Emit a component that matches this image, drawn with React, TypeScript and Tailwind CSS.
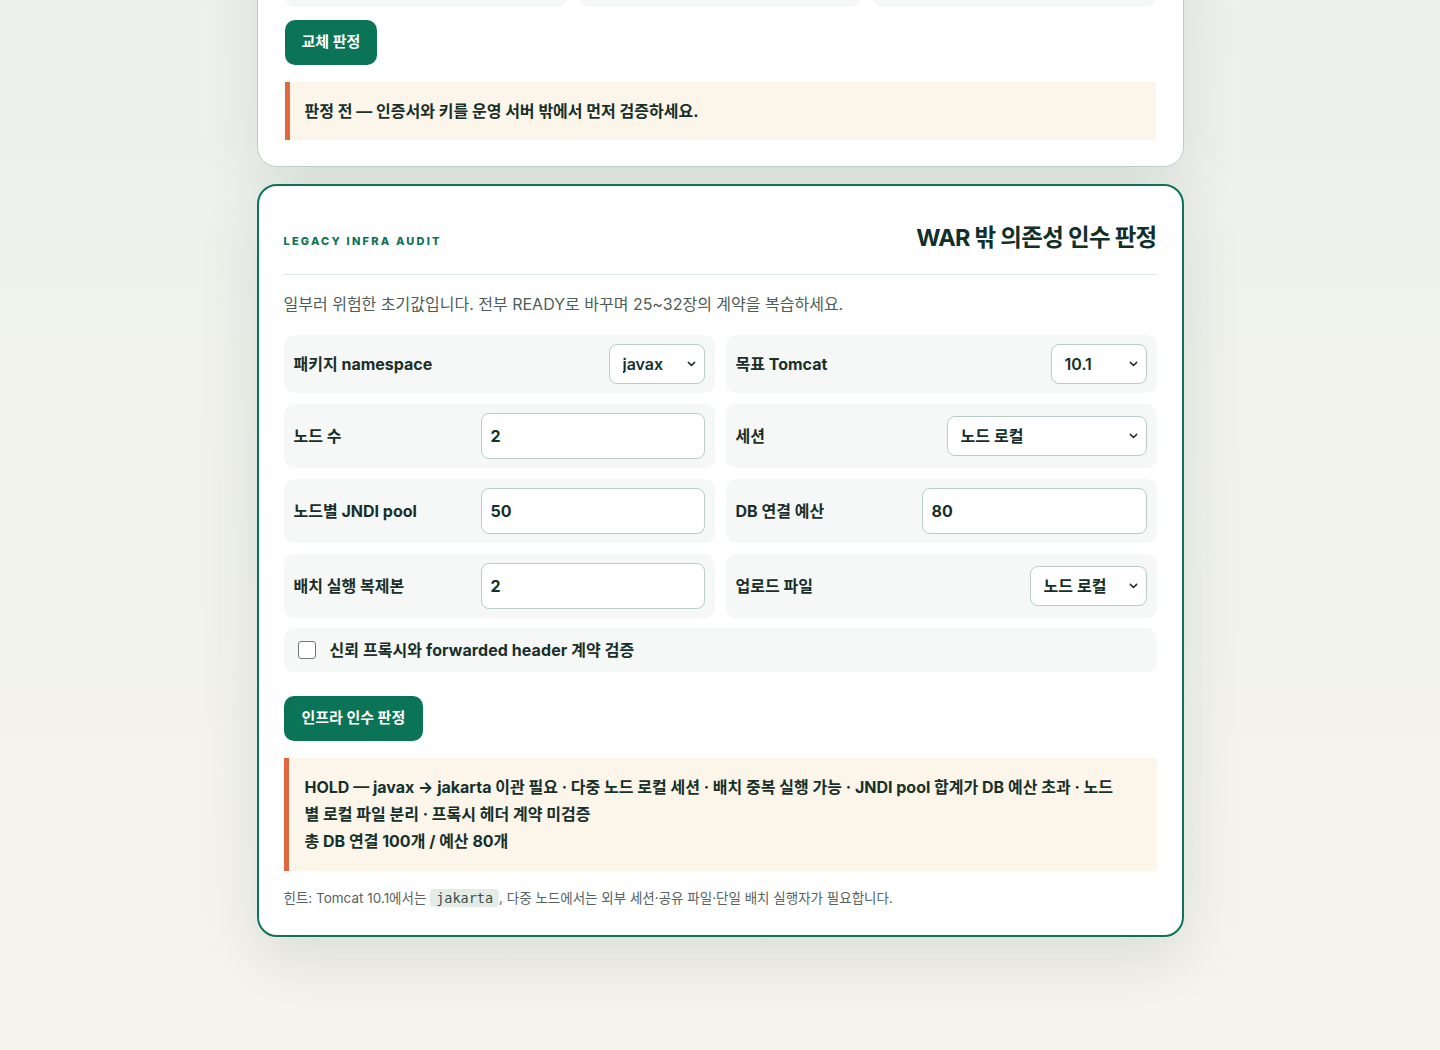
import { useState } from "react";

const font = { fontFamily: '"Inter", "Noto Sans CJK KR", sans-serif' };

function Chevron() {
  return (
    <svg
      viewBox="0 0 10 6"
      className="pointer-events-none absolute right-[9px] top-1/2 h-[6px] w-[9px] -translate-y-1/2"
      fill="none"
      stroke="#1d2b27"
      strokeWidth="1.6"
      strokeLinecap="round"
      strokeLinejoin="round"
    >
      <path d="M1.5 1.2 5 4.7 8.5 1.2" />
    </svg>
  );
}

function Select({ value, options, width }: { value: string; options: string[]; width: string }) {
  const [v, setV] = useState(value);
  return (
    <div className={`relative ${width}`}>
      <select
        value={v}
        onChange={(e) => setV(e.target.value)}
        className="h-[40px] w-full appearance-none rounded-[8px] border border-[#b9cec6] bg-white pl-[13px] pr-[28px] text-[16px] font-semibold text-[#15302a] outline-none"
        style={font}
      >
        {options.map((o) => (
          <option key={o}>{o}</option>
        ))}
      </select>
      <Chevron />
    </div>
  );
}

function NumInput({ value, width }: { value: string; width: string }) {
  const [v, setV] = useState(value);
  return (
    <input
      value={v}
      onChange={(e) => setV(e.target.value)}
      className={`h-[46px] ${width} rounded-[8px] border border-[#b9cec6] bg-white px-[9px] text-[16px] font-bold text-[#15302a] outline-none`}
      style={font}
    />
  );
}

function Row({ label, children }: { label: string; children: React.ReactNode }) {
  return (
    <div className="flex items-center justify-between rounded-[10px] bg-[#f5f8f6] px-[10px] py-[9px]">
      <span className="text-[16px] font-bold text-[#1a2f29]">{label}</span>
      {children}
    </div>
  );
}

export default function App() {
  const [proxy, setProxy] = useState(false);

  return (
    <div
      className="min-h-[1050px] overflow-hidden bg-gradient-to-b from-[#edf0eb] to-[#f6f4ed] pb-[113px]"
      style={font}
    >
      <div className="mx-auto flex w-[927px] flex-col gap-[17px]">
        {/* previous card, scrolled mostly out of view */}
        <div className="mt-[-71px] rounded-[20px] border border-[#bcd0c8] bg-white px-[27px] pt-[27px] pb-[26px] shadow-[0_24px_60px_rgba(30,70,55,0.10)]">
          <div className="grid grid-cols-3 gap-[12px]">
            <div className="h-[50px] rounded-[10px] bg-[#f5f8f6]" />
            <div className="h-[50px] rounded-[10px] bg-[#f5f8f6]" />
            <div className="h-[50px] rounded-[10px] bg-[#f5f8f6]" />
          </div>
          <button className="mt-[13px] h-[45px] rounded-[10px] bg-[#0b7457] px-[17px] text-[15px] font-bold text-white">
            교체 판정
          </button>
          <div className="mt-[17px] border-l-[5px] border-[#e0673f] bg-[#fcf5ea] py-[17px] pl-[15px] text-[16px] leading-[24px] font-bold text-[#17302a]">
            판정 전 — 인증서와 키를 운영 서버 밖에서 먼저 검증하세요.
          </div>
        </div>

        {/* legacy infra audit */}
        <div className="rounded-[20px] border-2 border-[#0d7457] bg-white px-[25px] pt-[26px] pb-[26px] shadow-[0_24px_60px_rgba(30,70,55,0.12)]">
          <div className="mt-[10px] flex items-center justify-between border-b border-[#dfe6e3] pb-[20px]">
            <span className="mt-[7px] text-[11px] font-extrabold tracking-[0.2em] text-[#0e7256]">
              LEGACY INFRA AUDIT
            </span>
            <h2 className="text-[23.5px] leading-[32px] font-bold tracking-[-0.03em] text-[#12302a]">
              WAR 밖 의존성 인수 판정
            </h2>
          </div>

          <p className="mt-[17px] text-[16px] leading-[24px] text-[#4d5d58]">
            일부러 위험한 초기값입니다. 전부 READY로 바꾸며 25~32장의 계약을 복습하세요.
          </p>

          <div className="mt-[19px] grid grid-cols-2 gap-x-[11px] gap-y-[11px]">
            <Row label="패키지 namespace">
              <Select value="javax" options={["javax", "jakarta"]} width="w-[96px]" />
            </Row>
            <Row label="목표 Tomcat">
              <Select value="10.1" options={["9.0", "10.1"]} width="w-[96px]" />
            </Row>
            <Row label="노드 수">
              <NumInput value="2" width="w-[224px]" />
            </Row>
            <Row label="세션">
              <Select value="노드 로컬" options={["노드 로컬", "외부 세션 저장소"]} width="w-[200px]" />
            </Row>
            <Row label="노드별 JNDI pool">
              <NumInput value="50" width="w-[224px]" />
            </Row>
            <Row label="DB 연결 예산">
              <NumInput value="80" width="w-[225px]" />
            </Row>
            <Row label="배치 실행 복제본">
              <NumInput value="2" width="w-[224px]" />
            </Row>
            <Row label="업로드 파일">
              <Select value="노드 로컬" options={["노드 로컬", "공유 스토리지"]} width="w-[117px]" />
            </Row>
          </div>

          <label className="mt-[10px] flex h-[44px] items-center gap-[14px] rounded-[10px] bg-[#f5f8f6] px-[14px]">
            <input
              type="checkbox"
              checked={proxy}
              onChange={(e) => setProxy(e.target.checked)}
              className="h-[18px] w-[18px] appearance-none rounded-[3px] border border-[#767676] bg-white checked:bg-[#0b7457]"
            />
            <span className="text-[16px] leading-[24px] font-bold tracking-[0.005em] text-[#1a2f29]">
              신뢰 프록시와 forwarded header 계약 검증
            </span>
          </label>

          <button className="mt-[24px] h-[45px] rounded-[10px] bg-[#0b7457] px-[18px] text-[15px] font-bold text-white">
            인프라 인수 판정
          </button>

          <div className="mt-[17px] border-l-[5px] border-[#e0673f] bg-[#fcf5ea] py-[16px] pl-[16px] pr-[32px] text-[16px] leading-[27px] font-bold text-[#17302a]">
            <div>
              HOLD — javax → jakarta 이관 필요 · 다중 노드 로컬 세션 · 배치 중복 실행 가능 · JNDI pool 합계가 DB 예산 초과 · 노드별 로컬 파일 분리 · 프록시 헤더 계약 미검증
            </div>
            <div>총 DB 연결 100개 / 예산 80개</div>
          </div>

          <p className="mt-[16px] text-[13.5px] leading-[22px] text-[#56645f]">
            힌트: Tomcat 10.1에서는{" "}
            <code
              className="rounded-[4px] bg-[#e4ece8] px-[6px] py-[1px] text-[13.5px] text-[#3d4b47]"
              style={{ fontFamily: '"DejaVu Sans Mono", monospace' }}
            >
              jakarta
            </code>
            , 다중 노드에서는 외부 세션·공유 파일·단일 배치 실행자가 필요합니다.
          </p>
        </div>
      </div>
    </div>
  );
}
